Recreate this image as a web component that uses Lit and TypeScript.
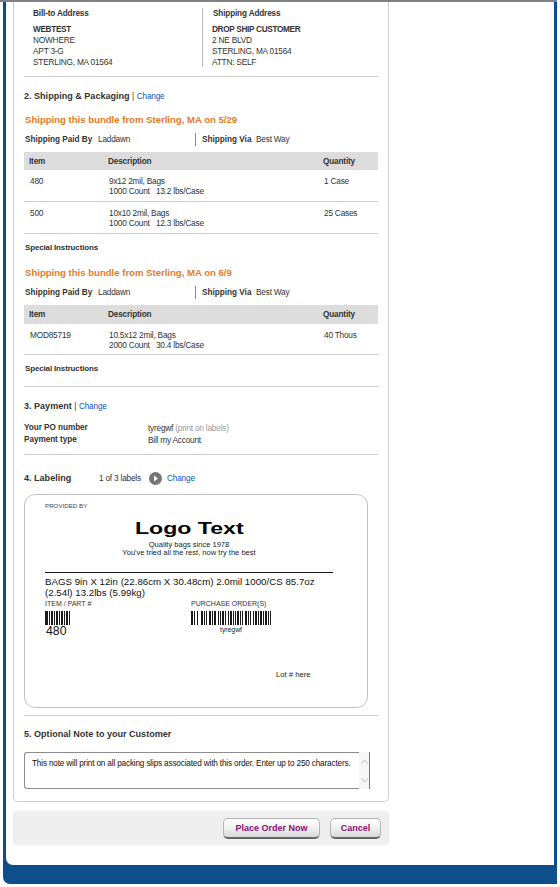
import { LitElement, html, css, svg } from "lit";
import { customElement } from "lit/decorators.js";

const bars = (w: number[], h: number, tint = "#1a1a1a") => {
  let x = 0;
  const rects = w.map((n, i) => {
    const r = i % 2 === 0 ? svg`<rect x=${x} y="0" width=${n} height=${h} fill=${tint}></rect>` : null;
    x += n;
    return r;
  });
  return html`<svg class="bar" width=${x} height=${h} viewBox="0 0 ${x} ${h}" shape-rendering="crispEdges">${rects}</svg>`;
};

const ITEM_BARS = [3, 1, 1, 1, 2, 1, 1, 1, 2, 1, 1, 1, 2, 1, 1, 1, 2, 1, 1];
const PO_BARS = [2, 1, 1, 2, 1, 3, 2, 1, 1, 1, 1, 2, 2, 1, 1, 1, 2, 2, 1, 1, 1, 1, 2, 1, 1, 2, 1, 1, 2, 1, 1, 1, 1, 1, 2, 1, 1, 1, 1, 2, 2, 1, 1, 1, 1, 2, 1, 1, 2, 1, 1, 1, 2, 1, 1, 1, 2, 1, 1, 1, 1];

interface Line { item: string; d1: string; d2: string; qty: string; }

@customElement("app-root")
export class AppRoot extends LitElement {
  static styles = css`
    :host { display: block; width: 560px; height: 887px; overflow: hidden; background: #fff;
      font-family: "Liberation Sans", Arial, sans-serif; font-size: 8.3px; letter-spacing: -0.22px; color: #333; }
    * { box-sizing: border-box; }
    .topline { height: 2px; width: 557px; background: #808080; }
    .frame { margin-left: 3px; width: 554px; height: 882px; padding: 0 3px 19px; background: #0e4e8c;
      border-radius: 0 0 0 7px; }
    .panel { height: 863px; padding-left: 7px; background: #fff; border-radius: 0 0 0 7px; }
    .card { width: 376px; height: 800px; padding: 0 10px; border: 1px solid #d0d0d0; border-top: none;
      border-radius: 0 0 5px 5px; }
    .addr { display: flex; height: 75px; padding-top: 6px; border-bottom: 1px solid #ccc; }
    .addr .col { height: 59px; line-height: 11px; }
    .addr .l { width: 179px; padding-left: 9px; border-right: 1px solid #bbb; }
    .addr .r { padding-left: 9px; }
    .addr .hd { font-weight: bold; margin-bottom: 5px; font-size: 8.2px; letter-spacing: -0.15px; }
    .addr .r .hd { margin-left: 1px; }
    .addr b { display: block; font-size: 8.2px; letter-spacing: -0.3px; }
    .title { height: 12px; line-height: 12px; font-size: 9.05px; letter-spacing: 0; font-weight: bold; color: #333; white-space: nowrap; }
    .title .sep { font-weight: normal; font-size: 8.2px; }
    a { color: #0b58c4; font-weight: normal; font-size: 8.2px; letter-spacing: -0.15px; text-decoration: none; }
    .t2 { margin-top: 13px; }
    .orange { height: 12px; line-height: 14px; margin: 11px 0 0 1px; font-size: 9.57px; letter-spacing: 0; font-weight: bold; color: #e67a1f; }
    .orange.again { margin-top: 13px; }
    .paid { display: flex; height: 13px; margin-top: 8px; line-height: 13px; }
    .paid .a { width: 172px; padding-left: 1px; border-right: 1px solid #888; }
    .paid b { display: inline-block; font-size: 8.2px; letter-spacing: 0; }
    .paid .a b { width: 73px; }
    .paid .b { padding-left: 6px; }
    .paid .b b { width: 54px; }
    .grid { display: grid; grid-template-columns: 79px 215px 1fr; }
    .head { height: 18px; margin-top: 6px; line-height: 20px; padding-left: 5px; background: #dcdcdc; font-weight: bold; font-size: 8.2px; letter-spacing: -0.15px; }
    .head.tall { height: 19px; line-height: 20px; }
    .row { height: 32px; padding: 6px 0 0 6px; line-height: 10px; border-bottom: 1px solid #ccc; }
    .row.short { height: 31px; }
    .special { height: 12px; margin: 7px 0 0 1px; line-height: 14px; font-weight: bold; font-size: 8px; letter-spacing: -0.15px; }
    hr { display: block; height: 1px; margin: 0; border: 0; background: #ccc; }
    .r1 { margin-top: 12px; }
    .po { display: grid; grid-template-columns: 124px 1fr; height: 24px; margin-top: 10px; line-height: 12px; }
    .po b { font-weight: bold; font-size: 8.2px; letter-spacing: -0.05px; }
    .po i { font-style: normal; color: #999; }
    .r2 { margin-top: 8px; }
    .lab { display: flex; align-items: center; height: 12px; margin-top: 17px; }
    .lab .title { width: 75px; }
    .lab .count { width: 50px; }
    .lab svg { display: block; margin-right: 5px; }
    .box { height: 214px; margin-top: 10px; width: 344px; padding: 7px 0 0 20px; border: 1px solid #c4c4c4; border-radius: 11px; color: #111; letter-spacing: 0; }
    .prov { height: 8px; line-height: 8px; font-size: 6.2px; color: #444; }
    .brand { width: 288px; text-align: center; }
    .logo { height: 18px; margin-top: 9px; line-height: 18px; font-size: 16.3px; font-weight: bold; color: #000; }
    .logo span { display: inline-block; transform: scaleX(1.42); }
    .tag { margin-top: 3px; line-height: 8px; padding-top: 1px; height: 17px; font-size: 7.55px; color: #222; }
    .black { height: 1px; width: 288px; margin-top: 15px; background: #111; }
    .desc { width: 288px; margin-top: 3px; line-height: 11px; font-size: 9.73px; }
    .codes { display: grid; grid-template-columns: 146px 1fr; margin-top: 2px; }
    .cap { height: 8px; line-height: 8px; font-size: 7px; color: #333; }
    .bar { display: block; margin-top: 3px; }
    .num { height: 12px; margin-left: 1px; line-height: 13px; font-size: 12.3px; }
    .po-num { width: 80px; text-align: center; height: 8px; line-height: 10px; font-size: 6.8px; color: #222; }
    .lot { margin: 34px 0 0 231px; line-height: 8px; font-size: 7.7px; color: #222; }
    .r3 { margin-top: 7px; }
    .t5 { margin-top: 12px; }
    .note { display: flex; width: 346px; height: 37px; margin-top: 12px; }
    .note .txt { flex: 1; min-width: 0; padding: 5px 0 0 7px; line-height: 12px; font-size: 8.2px; letter-spacing: -0.16px; color: #111; background: #fff;
      border: 1px solid #8c8c8c; border-right: none; border-radius: 3px 0 0 3px; white-space: nowrap; }
    .note .sb { display: flex; flex-direction: column; justify-content: space-between; align-items: center;
      width: 11px; padding: 7px 0 6px; background: #f6f6f6; border-right: 1px solid #777; }
    .sb svg { display: block; }
    .actions { display: flex; justify-content: flex-end; align-items: center; gap: 10px; width: 376px; height: 34px;
      margin-top: 9px; padding-right: 8px; background: #eee; border-radius: 4px; }
    .btn { display: flex; align-items: center; justify-content: center; height: 21px; font-size: 9px; letter-spacing: 0; font-weight: bold; color: #8c0f78;
      background: linear-gradient(#fff, #f2f2f2 45%, #d9d9d9); border: 1px solid #b5b5b5; border-bottom: 2px solid #666;
      border-radius: 5px; }
    .place { width: 97px; }
    .cancel { width: 51px; }
  `;

  private table(lines: Line[], tall: boolean, short: boolean) {
    return html`
      <div class="grid head ${tall ? "tall" : ""}"><span>Item</span><span>Description</span><span>Quantity</span></div>
      ${lines.map((l) => html`<div class="grid row ${short ? "short" : ""}">
        <span>${l.item}</span><span>${l.d1}<br />${l.d2}</span><span>${l.qty}</span></div>`)}`;
  }

  private paid() {
    return html`<div class="paid">
      <div class="a"><b>Shipping Paid By</b>Laddawn</div>
      <div class="b"><b>Shipping Via</b>Best Way</div>
    </div>`;
  }

  render() {
    return html`
      <div class="topline"></div>
      <div class="frame"><div class="panel">
        <div class="card">
          <div class="addr">
            <div class="col l"><div class="hd">Bill-to Address</div><b>WEBTEST</b>NOWHERE<br />APT 3-G<br />STERLING, MA 01564</div>
            <div class="col r"><div class="hd">Shipping Address</div><b>DROP SHIP CUSTOMER</b>2 NE BLVD<br />STERLING, MA 01564<br />ATTN: SELF</div>
          </div>
          <div class="title t2">2. Shipping &amp; Packaging <span class="sep">|</span> <a>Change</a></div>
          <div class="orange">Shipping this bundle from Sterling, MA on 5/29</div>
          ${this.paid()}
          ${this.table([
            { item: "480", d1: "9x12 2mil, Bags", d2: "1000 Count\u00a0\u00a0 13.2 lbs/Case", qty: "1 Case" },
            { item: "500", d1: "10x10 2mil, Bags", d2: "1000 Count\u00a0\u00a0 12.3 lbs/Case", qty: "25 Cases" },
          ], false, false)}
          <div class="special">Special Instructions</div>
          <div class="orange again">Shipping this bundle from Sterling, MA on 6/9</div>
          ${this.paid()}
          ${this.table([{ item: "MOD85719", d1: "10.5x12 2mil, Bags", d2: "2000 Count\u00a0\u00a0 30.4 lbs/Case", qty: "40 Thous" }], true, true)}
          <div class="special">Special Instructions</div>
          <hr class="r1" />
          <div class="title t2">3. Payment <span class="sep">|</span> <a>Change</a></div>
          <div class="po">
            <b>Your PO number</b><span>tyregwf <i>(print on labels)</i></span>
            <b>Payment type</b><span>Bill my Account</span>
          </div>
          <hr class="r2" />
          <div class="lab">
            <div class="title">4. Labeling</div>
            <div class="count">1 of 3 labels</div>
            <svg width="13" height="13" viewBox="0 0 13 13"><circle cx="6.5" cy="6.5" r="6.5" fill="#767676"></circle><path d="M5 3.5 9 6.5 5 9.5Z" fill="#fff"></path></svg>
            <a>Change</a>
          </div>
          <div class="box">
            <div class="prov">PROVIDED BY</div>
            <div class="brand">
              <div class="logo"><span>Logo Text</span></div>
              <div class="tag">Quality bags since 1978<br />You've tried all the rest, now try the best</div>
            </div>
            <div class="black"></div>
            <div class="desc">BAGS 9in X 12in (22.86cm X 30.48cm) 2.0mil 1000/CS 85.7oz (2.54l) 13.2lbs (5.99kg)</div>
            <div class="codes">
              <div><div class="cap">ITEM / PART #</div>${bars(ITEM_BARS, 14)}<div class="num">480</div></div>
              <div><div class="cap">PURCHASE ORDER(S)</div>${bars(PO_BARS, 14)}<div class="po-num">tyregwf</div></div>
            </div>
            <div class="lot">Lot # here</div>
          </div>
          <hr class="r3" />
          <div class="title t5">5. Optional Note to your Customer</div>
          <div class="note">
            <div class="txt">This note will print on all packing slips associated with this order. Enter up to 250 characters.</div>
            <div class="sb">
              <svg width="7" height="5" viewBox="0 0 7 5"><path d="M.5 4.5 3.5 1 6.5 4.5" fill="none" stroke="#bbb"></path></svg>
              <svg width="7" height="5" viewBox="0 0 7 5"><path d="M.5.5 3.5 4 6.5.5" fill="none" stroke="#bbb"></path></svg>
            </div>
          </div>
        </div>
        <div class="actions">
          <div class="btn place">Place Order Now</div>
          <div class="btn cancel">Cancel</div>
        </div>
      </div></div>
    `;
  }
}
